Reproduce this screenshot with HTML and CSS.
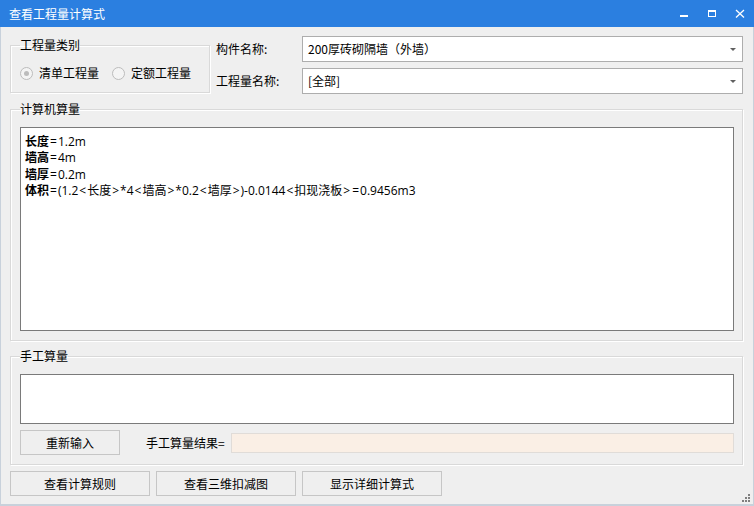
FILE: index.html
```html
<!DOCTYPE html>
<html lang="zh-CN">
<head>
<meta charset="utf-8">
<title>查看工程量计算式</title>
<link rel="stylesheet" href="styles.css">
</head>
<body>
<div class="window">
  <header class="titlebar">
    <span class="title">查看工程量计算式</span>
    <div class="controls">
      <span class="ctl"><svg width="28" height="27" viewBox="0 0 28 27"><rect x="10" y="15" width="8" height="2" fill="#fff"/></svg></span>
      <span class="ctl"><svg width="28" height="27" viewBox="0 0 28 27"><rect x="10" y="10" width="8" height="2" fill="#fff"/><rect x="10" y="10" width="1" height="7" fill="#fff"/><rect x="17" y="10" width="1" height="7" fill="#fff"/><rect x="10" y="16" width="8" height="1" fill="#fff"/></svg></span>
      <span class="ctl"><svg width="28" height="27" viewBox="0 0 28 27"><path d="M10 10 L18 17.5 M18 10 L10 17.5" stroke="#fff" stroke-width="1.3" fill="none"/></svg></span>
    </div>
  </header>
  <main class="content">
    <div class="top-row">
      <fieldset class="group type-group">
        <legend>工程量类别</legend>
        <div class="radios">
          <label class="radio"><span class="dot checked"></span>清单工程量</label>
          <label class="radio"><span class="dot"></span>定额工程量</label>
        </div>
      </fieldset>
      <div class="fields">
        <span class="field-label">构件名称:</span>
        <div class="combo"><span class="combo-text">200厚砖砌隔墙（外墙）</span><span class="arrow"></span></div>
        <span class="field-label">工程量名称:</span>
        <div class="combo"><span class="combo-text">[全部]</span><span class="arrow"></span></div>
      </div>
    </div>

    <fieldset class="group calc-group">
      <legend>计算机算量</legend>
      <div class="textbox calc-box">
        <div class="line"><b>长度</b><span class="op">=</span>1.2m</div>
        <div class="line"><b>墙高</b><span class="op">=</span>4m</div>
        <div class="line"><b>墙厚</b><span class="op">=</span>0.2m</div>
        <div class="line"><b>体积</b><span class="op">=</span>(1.2<span class="op">&lt;</span>长度<span class="op">&gt;</span>*4<span class="op">&lt;</span>墙高<span class="op">&gt;</span>*0.2<span class="op">&lt;</span>墙厚<span class="op">&gt;</span>)-0.0144<span class="op">&lt;</span>扣现浇板<span class="op">&gt;</span><span class="op">=</span>0.9456m3</div>
      </div>
    </fieldset>

    <fieldset class="group manual-group">
      <legend>手工算量</legend>
      <div class="textbox manual-box"></div>
      <div class="manual-row">
        <button class="btn reinput">重新输入</button>
        <span class="result-label">手工算量结果=</span>
        <div class="result"></div>
      </div>
    </fieldset>

    <div class="bottom-buttons">
      <button class="btn wide">查看计算规则</button>
      <button class="btn wide">查看三维扣减图</button>
      <button class="btn wide">显示详细计算式</button>
    </div>
  </main>
  <span class="grip"><svg width="8" height="8" viewBox="0 0 8 8"><g fill="#7f7f7f"><rect x="6" y="0" width="2" height="2"/><rect x="3" y="3" width="2" height="2"/><rect x="6" y="3" width="2" height="2"/><rect x="0" y="6" width="2" height="2"/><rect x="3" y="6" width="2" height="2"/><rect x="6" y="6" width="2" height="2"/></g></svg></span>
</div>
</body>
</html>
```

FILE: styles.css
```css
* { box-sizing: border-box; }
html, body { margin: 0; padding: 0; }
body {
  width: 754px;
  height: 506px;
  overflow: hidden;
  font-family: "Noto Sans CJK SC", "Noto Sans", sans-serif;
  font-size: 12px;
  color: #000;
  background: #efefef;
}
.window {
  width: 754px;
  height: 506px;
  display: flex;
  flex-direction: column;
  background: #efefef;
  position: relative;
}
.titlebar {
  height: 27px;
  flex: none;
  background: #2b7fe0;
  color: #fff;
  display: flex;
  align-items: center;
  justify-content: space-between;
  padding-left: 9px;
}
.title { font-size: 12px; line-height: 16px; }
.controls { display: flex; height: 27px; }
.ctl { width: 28px; height: 27px; display: block; }
.ctl svg { display: block; }

.content {
  flex: 1;
  display: flex;
  flex-direction: column;
  border: solid #c8d1db;
  border-width: 0 1px 2px 1px;
  padding: 9px 10px 0 9px;
}

.group {
  margin: 0;
  border: 1px solid #d9d9d9;
  box-shadow: 1px 1px 0 #fff, inset 1px 1px 0 #fff;
  min-width: 0;
}
.group legend {
  padding: 0;
  font-size: 12px;
  line-height: 16px;
}

.top-row { display: flex; align-items: flex-start; }
.type-group {
  width: 200px;
  margin-top: 1px;
  padding: 12px 9px 11px 9px;
}
.radios { display: flex; height: 16px; align-items: center; }
.radio { display: flex; align-items: center; line-height: 16px; }
.radio + .radio { margin-left: 13px; }
.dot {
  width: 13px;
  height: 13px;
  border-radius: 50%;
  border: 1px solid #bcbcbc;
  background: #f4f4f4;
  margin-right: 6px;
  position: relative;
}
.dot.checked::after {
  content: "";
  position: absolute;
  left: 3px;
  top: 3px;
  width: 5px;
  height: 5px;
  border-radius: 50%;
  background: #bcbcbc;
}

.fields {
  flex: 1;
  margin-left: 6px;
  display: grid;
  grid-template-columns: 86px 1fr;
  grid-template-rows: 26px 26px;
  row-gap: 6px;
  align-items: center;
}
.field-label { line-height: 16px; }
.combo {
  height: 26px;
  background: #fff;
  border: 1px solid #adadad;
  display: flex;
  align-items: center;
  justify-content: space-between;
  padding: 0 5px 0 5px;
}
.combo-text { line-height: 16px; }
.arrow {
  width: 0;
  height: 0;
  border-left: 3px solid transparent;
  border-right: 3px solid transparent;
  border-top: 3px solid #606060;
  margin-right: 1px;
}

.calc-group {
  margin-top: 7px;
  padding: 10px 8px 9px 9px;
}
.textbox {
  background: #fff;
  border: 1px solid #7a7a7a;
}
.calc-box {
  height: 204px;
  padding: 5.5px 4px;
  font-family: "Open Sans", "Noto Sans CJK SC", sans-serif;
}
.line { line-height: 16.5px; white-space: nowrap; }
.line b { font-weight: bold; }
.op { padding: 0 1px; }

.manual-group {
  margin-top: 7px;
  padding: 10px 8px 9px 9px;
}
.manual-box { height: 50px; }
.manual-row {
  margin-top: 6px;
  display: flex;
  align-items: center;
  height: 25px;
}
.btn {
  font-family: inherit;
  font-size: 12px;
  color: #000;
  background: #efefef;
  border: 1px solid #c6c6c6;
  height: 25px;
  padding: 0;
  line-height: 16px;
}
.reinput { width: 100px; }
.result-label { margin-left: 26px; line-height: 16px; }
.result {
  flex: 1;
  margin-left: 6px;
  height: 20px;
  background: #faefe5;
  border: 1px solid #e0dcd8;
}

.bottom-buttons {
  margin-top: 6px;
  display: flex;
  gap: 6px;
}
.wide { width: 140px; }

.grip {
  position: absolute;
  right: 4px;
  bottom: 4px;
  width: 8px;
  height: 8px;
}
.grip svg { display: block; }
```
